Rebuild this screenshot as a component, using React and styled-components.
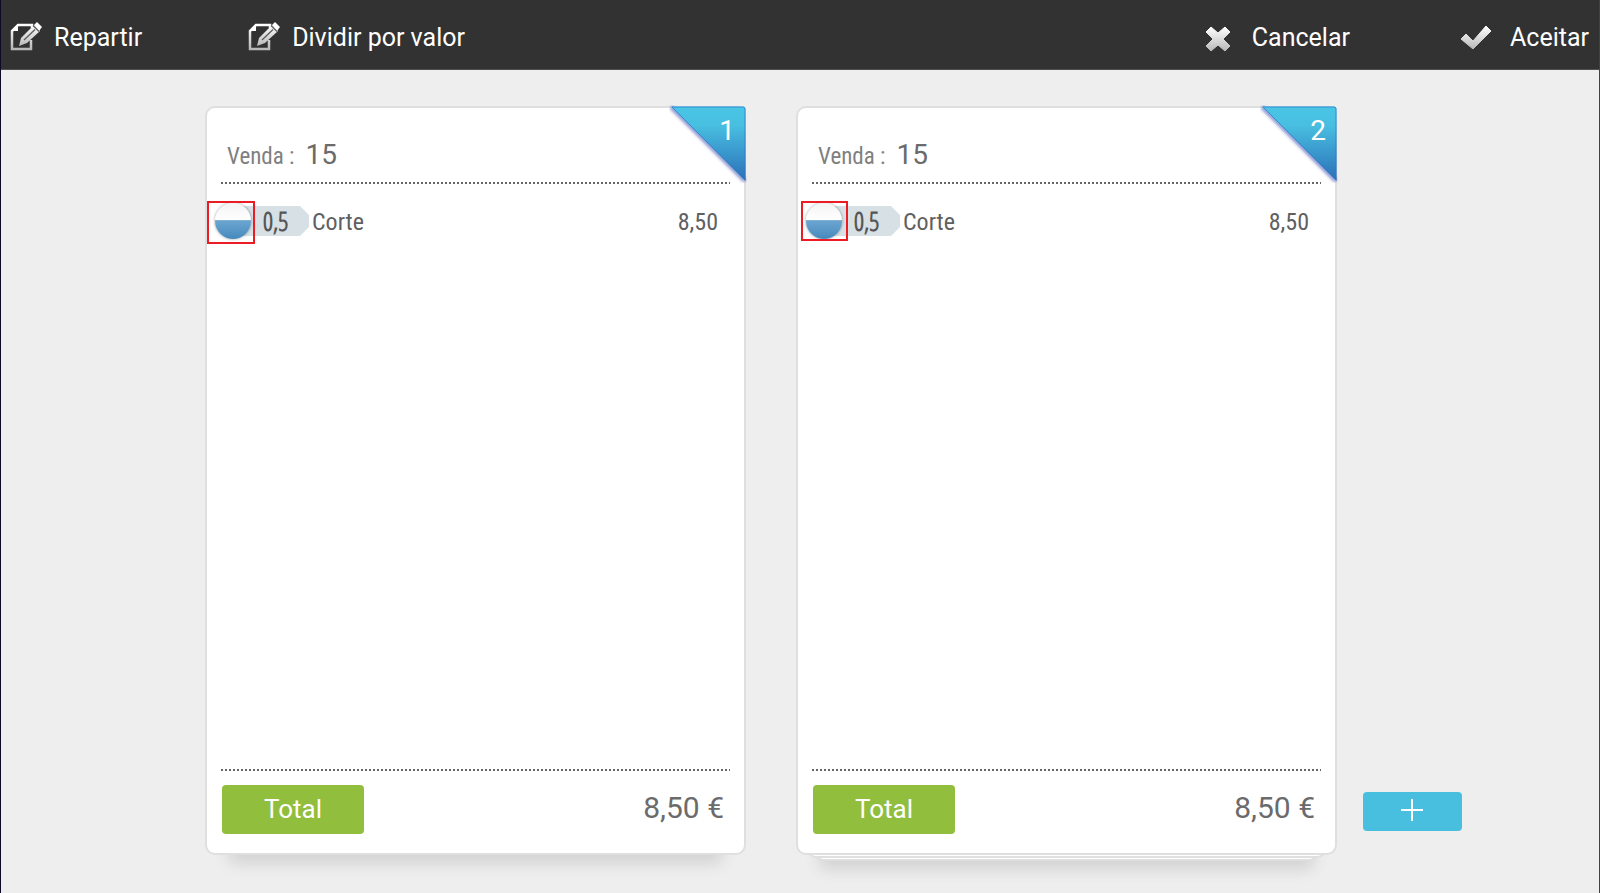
import styled, { createGlobalStyle } from 'styled-components';

const GlobalStyle = createGlobalStyle`
  * {
    box-sizing: border-box;
  }

  body {
    margin: 0;
    background-color: #eeeeee;
    font-family: Roboto, sans-serif;
  }

  button {
    border: none;
    font-family: inherit;
    cursor: pointer;
  }
`;

const Page = styled.div`
  display: flex;
  flex-direction: column;
  min-height: 100vh;
  border-left: 1px solid #0b0b22;
  border-right: 1px solid #3c3f55;
`;

const Toolbar = styled.header`
  display: flex;
  justify-content: space-between;
  height: 70px;
  padding: 6px 10px 0 9px;
  background-color: #323232;
  border-bottom: 1px solid #505050;
`;

const ToolbarGroup = styled.div`
  display: flex;
  gap: ${({ $gap }) => $gap}px;
`;

const ToolbarButton = styled.button`
  display: flex;
  align-items: center;
  gap: ${({ $gap }) => $gap}px;
  padding: 0;
  background: none;
  color: #ffffff;
  font-size: 25px;
  white-space: nowrap;
`;

const Main = styled.main`
  flex: 1;
  display: flex;
  gap: 26px;
  padding: 36px 137px 38px 204px;
`;

const Tickets = styled.div`
  flex: 1;
  display: grid;
  grid-template-columns: 1fr 1fr;
  gap: 50px;
`;

const TicketSlot = styled.div`
  position: relative;
  z-index: 0;
  display: grid;
`;

const Ticket = styled.article`
  position: relative;
  display: flex;
  flex-direction: column;
  padding: 0 14px 19px;
  background-color: #ffffff;
  border: 2px solid #dfdfdf;
  border-radius: 10px;
`;

/* sheets that stick out under a ticket */
const Sheet = styled.div`
  position: absolute;
  z-index: -1;
  left: ${({ $inset }) => $inset}px;
  right: ${({ $inset }) => $inset}px;
  bottom: ${({ $drop }) => -$drop}px;
  height: 30px;
  background-color: #ffffff;
  border: 2px solid #dfdfdf;
  border-radius: 10px;
`;

const Shadow = styled.div`
  position: absolute;
  z-index: -2;
  left: 24px;
  right: 24px;
  bottom: 0;
  height: 30px;
  box-shadow: 0 ${({ $drop }) => $drop}px 16px rgba(0, 0, 0, 0.12);
`;

const Corner = styled.div`
  position: absolute;
  top: -3px;
  right: -3px;
  width: 78px;
  height: 78px;
  color: #ffffff;
  font-size: 28px;
  line-height: 32px;

  svg {
    position: absolute;
    inset: 0;
  }

  span {
    position: absolute;
    top: 10px;
    right: 12px;
  }
`;

const TicketHeader = styled.h2`
  display: flex;
  align-items: baseline;
  gap: 11px;
  height: 74px;
  margin: 0;
  padding: 30px 0 0 6px;
  color: #6b6b6b;
  font-size: 28px;
  font-weight: 400;
  line-height: 34px;
`;

const Label = styled.span`
  color: #808080;
  font-family: 'Roboto Condensed', Roboto, sans-serif;
  font-size: 23px;
`;

const Dots = styled.div`
  height: 2px;
  background: repeating-linear-gradient(to right, #666666 0 2px, #ffffff 2px 4px);
`;

const Lines = styled.ul`
  flex: 1;
  margin: 0;
  padding: 22px 12px 0 0;
  list-style: none;
`;

const LineItem = styled.li`
  display: flex;
  align-items: center;
  height: 30px;
  color: #606060;
  font-family: 'Roboto Condensed', Roboto, sans-serif;
  font-size: 24px;
  line-height: 30px;
`;

const ItemLead = styled.span`
  position: relative;
  display: flex;
`;

const Quantity = styled.span`
  width: 76px;
  height: 30px;
  margin: 0 3px 0 12px;
  padding-left: 30px;
  background-color: #d7e0e5;
  clip-path: polygon(0 0, 67px 0, 100% 9px, 100% 21px, 67px 100%, 0 100%);
  color: #565656;
  font-family: 'Open Sans Condensed Light', 'Open Sans Condensed', sans-serif;
  font-size: 25px;
  font-weight: 700;
`;

const ItemName = styled.span`
  flex: 1;
  padding-top: 2px;
`;

const ItemPrice = styled.span`
  padding-top: 2px;
`;

const HalfMark = styled.span`
  position: absolute;
  top: -3px;
  left: -6px;
  width: 36px;
  height: 36px;
  border-radius: 50%;
  background: linear-gradient(#f3f3f3 0, #ffffff 46%, #a9bfcb 46%, #6ba5d0 50%, #4689bd 100%);
  box-shadow: 0 0 3px rgba(0, 0, 0, 0.4);
`;

const Highlight = styled.span`
  position: absolute;
  top: -5px;
  left: ${({ $left }) => $left}px;
  width: ${({ $width }) => $width}px;
  height: ${({ $height }) => $height}px;
  border: 2px solid #ec1c24;
`;

const TicketFooter = styled.footer`
  display: flex;
  align-items: center;
  justify-content: space-between;
  padding: 14px 6px 0 1px;
  color: #6b6b6b;
  font-size: 30px;
`;

const Amount = styled.span`
  padding-bottom: 4px;
`;

const TotalButton = styled.button`
  width: 142px;
  height: 49px;
  padding: 0 0 2px;
  background-color: #92be3e;
  border-radius: 4px;
  color: #ffffff;
  font-size: 26px;
`;

const AddButton = styled.button`
  align-self: flex-end;
  display: flex;
  align-items: center;
  justify-content: center;
  width: 99px;
  height: 39px;
  margin-bottom: 24px;
  padding: 0 2px 3px 0;
  background-color: #49bfe0;
  border-radius: 4px;
`;

const tickets = [
  { id: 1, sale: '15', total: '8,50 €', sheets: [], box: { left: -14, width: 48, height: 43 } },
  { id: 2, sale: '15', total: '8,50 €', sheets: [[10, 3], [18, 6]], box: { left: -11, width: 47, height: 40 } },
];

const Gradient = ({ id }) => (
  <linearGradient id={id} x1="0" y1="0" x2="0" y2="1">
    <stop offset="0" stopColor="#ffffff" />
    <stop offset="1" stopColor="#b8b8b8" />
  </linearGradient>
);

const EditIcon = ({ id }) => (
  <svg width="32" height="32" viewBox="0 0 32 32" aria-hidden="true">
    <defs><Gradient id={id} /></defs>
    <path d="M22 6V3H8L2 9v18h19v-9" fill="none" stroke={`url(#${id})`} strokeWidth="2.5" />
    <path d="M8 2v7H1z" fill="#ffffff" />
    <path d="M9 24l2-8L24 3l6 6-13 12z" fill={`url(#${id})`} />
    <path d="M24 3l3-3 5 5-3 4z" fill="#ffffff" />
    <path d="M23 3.5l6 6M14 18L25 7.500" fill="none" stroke="#5a5a5a" strokeWidth="1.2" />
  </svg>
);

const CancelIcon = () => (
  <svg width="32" height="32" viewBox="0 0 32 32" aria-hidden="true">
    <defs><Gradient id="cancel" /></defs>
    <path d="M9 5l7 6 7-6 5 5-7 7 7 7-5 5-7-6-7 6-5-5 7-7-7-7z" fill="url(#cancel)" stroke="url(#cancel)" strokeLinejoin="round" />
  </svg>
);

const AcceptIcon = () => (
  <svg width="32" height="32" viewBox="0 0 32 32" aria-hidden="true">
    <defs><Gradient id="accept" /></defs>
    <path d="M1 17l5-5 7 7L26 4l5 5-18 18z" fill="url(#accept)" stroke="url(#accept)" strokeLinejoin="round" />
  </svg>
);

const CornerMark = ({ number }) => (
  <Corner>
    <svg width="78" height="78" viewBox="0 0 78 78" aria-hidden="true">
      <defs>
        <linearGradient id={`corner-${number}`} x1="0" y1="0" x2="0" y2="1">
          <stop offset="0" stopColor="#49c5e5" />
          <stop offset="0.25" stopColor="#48bfe1" />
          <stop offset="1" stopColor="#2b6fb8" />
        </linearGradient>
        <filter id={`blur-${number}`}><feGaussianBlur stdDeviation="1.5" /></filter>
      </defs>
      <path d="M2 2l74 74" stroke="#3a4fb0" strokeOpacity="0.6" strokeWidth="4" filter={`url(#blur-${number})`} />
      <path d="M2 1.5H74q2.5 0 2.5 2.5V76z" fill={`url(#corner-${number})`} />
      <path d="M3 2H74q2 0 2 2V75z" fill="none" stroke="#2f76cc" strokeOpacity="0.7" />
    </svg>
    <span>{number}</span>
  </Corner>
);

const TicketCard = ({ ticket }) => (
  <TicketSlot>
    <Shadow $drop={ticket.sheets.length ? 14 : 8} />
    {[...ticket.sheets].reverse().map(([inset, drop]) => (
      <Sheet key={drop} $inset={inset} $drop={drop} />
    ))}
    <Ticket>
      <CornerMark number={ticket.id} />
      <TicketHeader>
        <Label>Venda :</Label>
        <span>{ticket.sale}</span>
      </TicketHeader>
      <Dots />
      <Lines>
        <LineItem>
          <ItemLead>
            <Quantity>0,5</Quantity>
            <HalfMark />
            <Highlight $left={ticket.box.left} $width={ticket.box.width} $height={ticket.box.height} />
          </ItemLead>
          <ItemName>Corte</ItemName>
          <ItemPrice>8,50</ItemPrice>
        </LineItem>
      </Lines>
      <Dots />
      <TicketFooter>
        <TotalButton type="button">Total</TotalButton>
        <Amount>{ticket.total}</Amount>
      </TicketFooter>
    </Ticket>
  </TicketSlot>
);

export default function App() {
  return (
    <>
      <GlobalStyle />
      <Page>
        <Toolbar>
          <ToolbarGroup $gap={106}>
            <ToolbarButton type="button" $gap={12}><EditIcon id="split" />Repartir</ToolbarButton>
            <ToolbarButton type="button" $gap={12}><EditIcon id="divide" />Dividir por valor</ToolbarButton>
          </ToolbarGroup>
          <ToolbarGroup $gap={110}>
            <ToolbarButton type="button" $gap={18}><CancelIcon />Cancelar</ToolbarButton>
            <ToolbarButton type="button" $gap={18}><AcceptIcon />Aceitar</ToolbarButton>
          </ToolbarGroup>
        </Toolbar>
        <Main>
          <Tickets>
            {tickets.map((ticket) => (
              <TicketCard key={ticket.id} ticket={ticket} />
            ))}
          </Tickets>
          <AddButton type="button" aria-label="Adicionar">
            <svg width="24" height="24" viewBox="0 0 24 24" aria-hidden="true">
              <path d="M12 1v22M1 12h22" stroke="#ffffff" strokeWidth="2" />
            </svg>
          </AddButton>
        </Main>
      </Page>
    </>
  );
}
